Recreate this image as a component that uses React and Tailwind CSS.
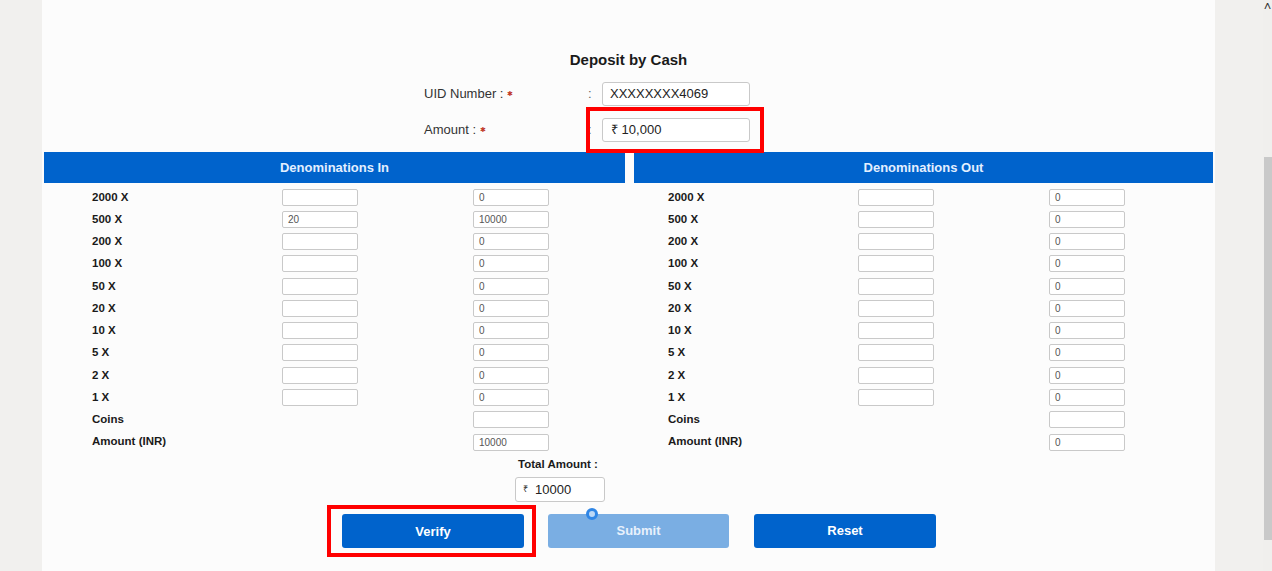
import React from "react";

const rows = [
  { label: "2000 X", inL: "", outL: "0", inR: "", outR: "0" },
  { label: "500 X", inL: "20", outL: "10000", inR: "", outR: "0" },
  { label: "200 X", inL: "", outL: "0", inR: "", outR: "0" },
  { label: "100 X", inL: "", outL: "0", inR: "", outR: "0" },
  { label: "50 X", inL: "", outL: "0", inR: "", outR: "0" },
  { label: "20 X", inL: "", outL: "0", inR: "", outR: "0" },
  { label: "10 X", inL: "", outL: "0", inR: "", outR: "0" },
  { label: "5 X", inL: "", outL: "0", inR: "", outR: "0" },
  { label: "2 X", inL: "", outL: "0", inR: "", outR: "0" },
  { label: "1 X", inL: "", outL: "0", inR: "", outR: "0" },
];

const SmallBox = ({ value }) => (
  <div className="w-[76px] h-[17px] border border-[#c9c9c9] rounded-[2px] bg-white text-[10px] text-[#555] leading-[15px] pl-[5px]">
    {value}
  </div>
);

const Panel = ({ title, side }) => {
  const left = side === "in";
  return (
    <div className={left ? "w-[581px]" : "w-[579px]"}>
      <div className="h-[31px] bg-[#0063cc] flex items-center justify-center text-[13px] font-bold text-[#e3efff]">
        {title}
      </div>
      <div className={`pt-[3px] ${left ? "pl-[48px]" : "pl-[34px]"}`}>
        {rows.map((r) => (
          <div key={r.label} className="grid grid-cols-[190px_191px_1fr] h-[22.27px] items-center">
            <span className="text-[11.5px] font-bold text-[#1a1a1a]">{r.label}</span>
            <SmallBox value={left ? r.inL : r.inR} />
            <SmallBox value={left ? r.outL : r.outR} />
          </div>
        ))}
        <div className="grid grid-cols-[190px_191px_1fr] h-[22.27px] items-center">
          <span className="text-[11.5px] font-bold text-[#1a1a1a]">Coins</span>
          <span />
          <SmallBox value="" />
        </div>
        <div className="grid grid-cols-[190px_191px_1fr] h-[22.27px] items-center">
          <span className="text-[11.5px] font-bold text-[#1a1a1a]">Amount (INR)</span>
          <span />
          <SmallBox value={left ? "10000" : "0"} />
        </div>
      </div>
    </div>
  );
};

const Star = () => <span className="text-[#c0392b] text-[7px] ml-[4px] relative -top-[2px]">✱</span>;

export default function App() {
  return (
    <div
      className="w-[1272px] h-[571px] flex bg-[#f1f0ee] overflow-hidden"
      style={{ fontFamily: "'Liberation Sans', Arial, sans-serif" }}
    >
      <div className="w-[42px] shrink-0" />

      {/* main form */}
      <div className="w-[1173px] shrink-0 bg-[#fcfcfc] px-[2px]">
        <div className="pt-[51px] text-center text-[15px] font-bold text-[#1a1a1a] leading-[18px]">
          Deposit by Cash
        </div>

        <div className="ml-[380px] mt-[13px] flex flex-col gap-[12px]">
          <div className="flex items-center h-[24px]">
            <span className="w-[164px] text-[13px] text-[#333]">
              UID Number :<Star />
            </span>
            <span className="w-[14px] text-[13px] text-[#666]">:</span>
            <div className="w-[148px] h-[24px] border border-[#c9c9c9] rounded-[3px] bg-white text-[13px] text-[#222] leading-[22px] pl-[7px]">
              XXXXXXXX4069
            </div>
          </div>
          <div className="flex items-center h-[24px]">
            <span className="w-[164px] text-[13px] text-[#333]">
              Amount :<Star />
            </span>
            <span className="w-[14px] text-[13px] text-[#666]">:</span>
            <div className="relative">
              <div className="w-[148px] h-[24px] border border-[#c9c9c9] rounded-[3px] bg-white text-[13px] text-[#222] leading-[22px] pl-[8px]">
                ₹ 10,000
              </div>
              <span className="absolute left-[-16px] right-[-14px] top-[-11px] bottom-[-11px] border-[4px] border-[#ff0000]" />
            </div>
          </div>
        </div>

        <div className="mt-[10px] flex gap-[9px]">
          <Panel title="Denominations In" side="in" />
          <Panel title="Denominations Out" side="out" />
        </div>

        <div className="ml-[471px] flex flex-col items-start">
          <span className="ml-[3px] mt-[4px] text-[11.5px] font-bold text-[#1a1a1a] leading-[14px]">Total Amount :</span>
          <div className="mt-[6px] w-[90px] h-[25px] border border-[#c9c9c9] rounded-[3px] bg-white flex items-center pl-[7px] gap-[7px]">
            <span className="text-[9px] text-[#333]">₹</span>
            <span className="text-[13px] text-[#222]">10000</span>
          </div>
        </div>

        <div className="ml-[298px] mt-[12px] flex gap-[24px]">
          <div className="relative">
            <button className="w-[182px] h-[34px] rounded-[3px] bg-[#0063cc] text-white text-[13px] font-bold pt-[2px]">
              Verify
            </button>
            <span className="absolute left-[-15px] right-[-12px] top-[-9px] bottom-[-9px] border-[4px] border-[#ff0000]" />
          </div>
          <div className="relative">
            <button className="w-[181px] h-[34px] rounded-[3px] bg-[#7aaee3] text-[#e8f1fc] text-[13px] font-bold">
              Submit
            </button>
            <span className="absolute left-[38px] top-[-6px] w-[12px] h-[12px] rounded-full border-[3px] border-[#2f86e6] bg-[#bcd8f6]" />
          </div>
          <button className="ml-[1px] w-[182px] h-[34px] rounded-[3px] bg-[#0063cc] text-white text-[13px] font-bold">
            Reset
          </button>
        </div>
      </div>

      {/* right gutter with scrollbar */}
      <div className="flex-1 flex justify-end">
        <div className="w-[9px] flex flex-col items-center bg-[#f0efed]">
          <span className="text-[#333] text-[13px] leading-[10px] mt-[2px]">˄</span>
          <div className="mt-[145px] w-[8px] h-[383px] bg-[#c9c9c9]" />
        </div>
      </div>
    </div>
  );
}
